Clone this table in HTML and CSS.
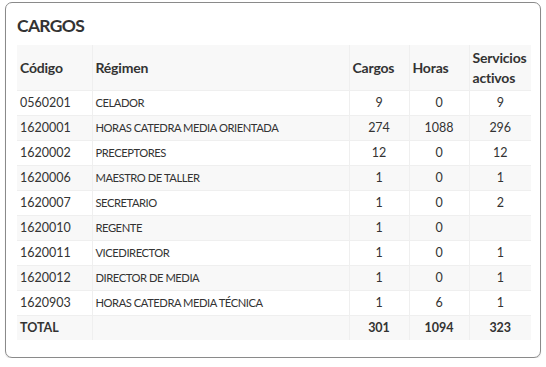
FILE: index.html
```html
<!DOCTYPE html>
<html lang="es">
<head>
<meta charset="utf-8">
<title>Cargos</title>
<link rel="stylesheet" href="styles.css">
</head>
<body>
<section class="card">
  <h3 class="card-title">CARGOS</h3>
  <table class="grid">
    <colgroup>
      <col class="c-code"><col class="c-reg"><col class="c-num"><col class="c-num"><col class="c-last">
    </colgroup>
    <thead>
      <tr><th>Código</th><th>Régimen</th><th>Cargos</th><th>Horas</th><th>Servicios activos</th></tr>
    </thead>
    <tbody>
      <tr><td>0560201</td><td class="reg">CELADOR</td><td class="num">9</td><td class="num">0</td><td class="num">9</td></tr>
      <tr><td>1620001</td><td class="reg">HORAS CATEDRA MEDIA ORIENTADA</td><td class="num">274</td><td class="num">1088</td><td class="num">296</td></tr>
      <tr><td>1620002</td><td class="reg">PRECEPTORES</td><td class="num">12</td><td class="num">0</td><td class="num">12</td></tr>
      <tr><td>1620006</td><td class="reg">MAESTRO DE TALLER</td><td class="num">1</td><td class="num">0</td><td class="num">1</td></tr>
      <tr><td>1620007</td><td class="reg">SECRETARIO</td><td class="num">1</td><td class="num">0</td><td class="num">2</td></tr>
      <tr><td>1620010</td><td class="reg">REGENTE</td><td class="num">1</td><td class="num">0</td><td class="num"></td></tr>
      <tr><td>1620011</td><td class="reg">VICEDIRECTOR</td><td class="num">1</td><td class="num">0</td><td class="num">1</td></tr>
      <tr><td>1620012</td><td class="reg">DIRECTOR DE MEDIA</td><td class="num">1</td><td class="num">0</td><td class="num">1</td></tr>
      <tr><td>1620903</td><td class="reg">HORAS CATEDRA MEDIA TÉCNICA</td><td class="num">1</td><td class="num">6</td><td class="num">1</td></tr>
      <tr class="total"><td>TOTAL</td><td></td><td class="num">301</td><td class="num">1094</td><td class="num">323</td></tr>
    </tbody>
  </table>
</section>
</body>
</html>
```
FILE: styles.css
```css
html, body {
  margin: 0;
  padding: 0;
  background: #ffffff;
}
body {
  padding: 2px 5px 0 5px;
  font-family: Lato, "Liberation Sans", sans-serif;
  color: #333333;
}
.card {
  border: 1px solid #8a8a8a;
  border-radius: 7px;
  padding: 12px 10px 17px 11px;
  box-shadow: 0 1px 1px rgba(0,0,0,0.15);
}
.card-title {
  margin: 0 0 8px 0;
  font-size: 17.5px;
  line-height: 22px;
  font-weight: 700;
  letter-spacing: -0.7px;
  color: #333333;
}
.grid {
  border-collapse: collapse;
  width: 514px;
  table-layout: fixed;
}
.c-code { width: 75px; }
.c-reg { width: 257px; }
.c-num { width: 60px; }
.c-last { width: 62px; }
.grid th, .grid td {
  border: 1px solid #efefef;
  padding: 0 3px;
  text-align: left;
}
.grid tr:first-child th { border-top: 0; }
.grid th:first-child, .grid td:first-child { border-left: 0; }
.grid th:last-child, .grid td:last-child { border-right: 0; }
.grid tbody tr:last-child td { border-bottom: 0; }
.grid th {
  background: #f8f8f8;
  font-size: 14px;
  font-weight: 700;
  letter-spacing: -0.2px;
  line-height: 20px;
  height: 45px;
  padding: 0 2px 0 3px;
  vertical-align: middle;
}
.grid td {
  font-size: 12.5px;
  height: 24px;
  line-height: 16px;
  vertical-align: middle;
}
.grid td.reg {
  font-size: 11.2px;
  letter-spacing: -0.45px;
}
.grid .num {
  text-align: center;
}
.grid tbody tr:nth-child(even) td {
  background: #f8f8f8;
}
.grid tr.total td {
  font-weight: 700;
  font-size: 12.5px;
}
```
